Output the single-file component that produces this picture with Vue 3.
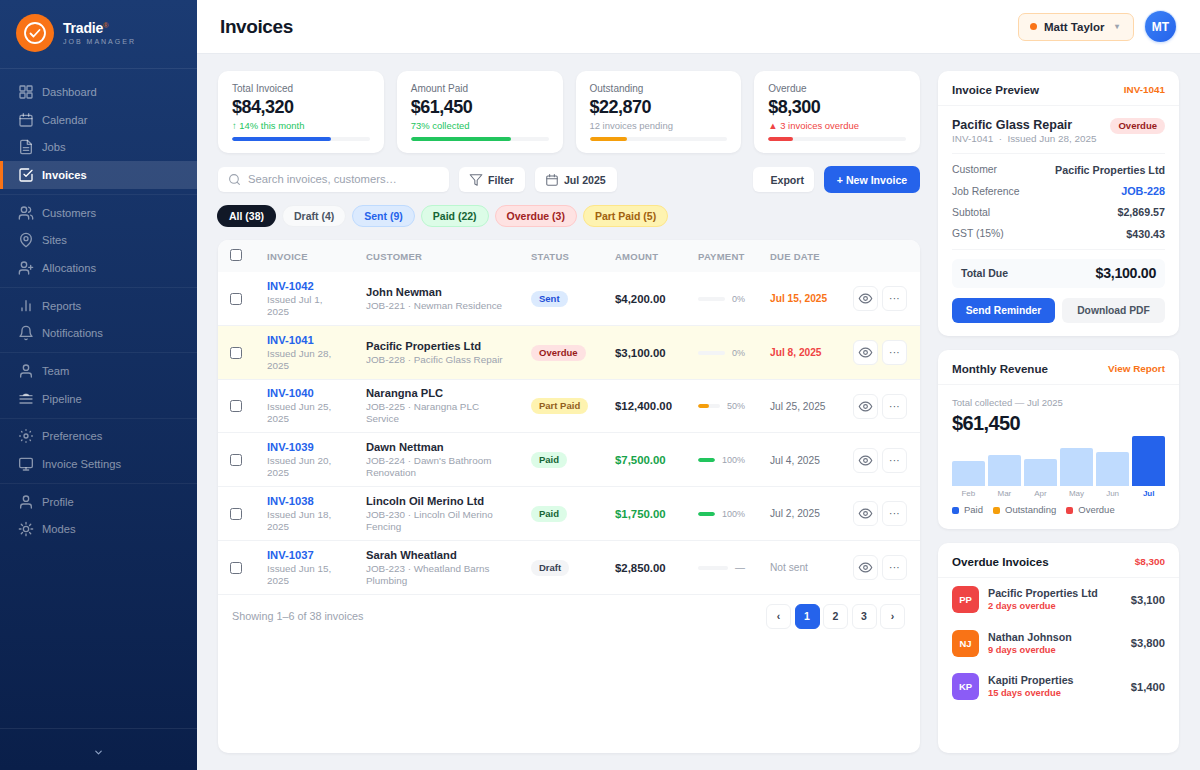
<script setup>
const icons = {
  grid: '<rect x="3" y="3" width="7.5" height="7.5" rx="1"/><rect x="13.5" y="3" width="7.5" height="7.5" rx="1"/><rect x="3" y="13.5" width="7.5" height="7.5" rx="1"/><rect x="13.5" y="13.5" width="7.5" height="7.5" rx="1"/>',
  calendar: '<rect x="3" y="5" width="18" height="16" rx="2"/><path d="M8 2.5v4M16 2.5v4M3 10h18"/>',
  file: '<path d="M14 2H6a2 2 0 0 0-2 2v16a2 2 0 0 0 2 2h12a2 2 0 0 0 2-2V8z"/><path d="M14 2v6h6M8 13h8M8 17h8"/>',
  check: '<path d="M21 11v8a2 2 0 0 1-2 2H5a2 2 0 0 1-2-2V5a2 2 0 0 1 2-2h11"/><path d="m9 11 3 3 9-9"/>',
  users: '<path d="M16 21v-2a4 4 0 0 0-4-4H6a4 4 0 0 0-4 4v2"/><circle cx="9" cy="7" r="4"/><path d="M22 21v-2a4 4 0 0 0-3-3.87M16 3.13a4 4 0 0 1 0 7.75"/>',
  pin: '<path d="M20 10c0 6-8 12-8 12s-8-6-8-12a8 8 0 0 1 16 0z"/><circle cx="12" cy="10" r="3"/>',
  userplus: '<path d="M16 21v-2a4 4 0 0 0-4-4H6a4 4 0 0 0-4 4v2"/><circle cx="9" cy="7" r="4"/><path d="M19 8v6M16 11h6"/>',
  bars: '<path d="M6 19v-4M12 19V4M18 19V9"/>',
  bell: '<path d="M6 8a6 6 0 0 1 12 0c0 7 3 9 3 9H3s3-2 3-9"/><path d="M10.3 21a2 2 0 0 0 3.4 0"/>',
  user: '<path d="M20 21v-2a4 4 0 0 0-4-4H8a4 4 0 0 0-4 4v2"/><circle cx="12" cy="7" r="4"/>',
  layers: '<path d="M3 12h18M3 18h18M3 7h18"/><path d="M8 6.5c1-2.5 7-2.500 8 0z" fill="currentColor"/>',
  dots: '<circle cx="12" cy="12" r="3"/><path d="M12 2.500v1M12 20.500v1M2.500 12h1M20.500 12h1M5.300 5.300l.7.7M18 18l.7.7M5.300 18.700l.7-.7M18 6l.7-.7"/>',
  monitor: '<rect x="2.500" y="3.500" width="19" height="14" rx="2"/><path d="M8 21h8M12 17.500V21"/>',
  sun: '<circle cx="12" cy="12" r="4"/><path d="M12 2v2.500M12 19.500V22M2 12h2.500M19.500 12H22M4.900 4.900l1.800 1.800M17.300 17.300l1.800 1.800M4.900 19.100l1.800-1.800M17.300 6.700l1.800-1.800"/>',
  search: '<circle cx="11" cy="11" r="8"/><path d="m21 21-4.300-4.300"/>',
  filter: '<path d="M22 3H2l8 9.460V19l4 2v-8.540z"/>',
  eye: '<path d="M2 12s3.500-7 10-7 10 7 10 7-3.500 7-10 7-10-7-10-7z"/><circle cx="12" cy="12" r="3"/>'
}

const navGroups = [
  [
    { label: 'Dashboard', icon: 'grid' },
    { label: 'Calendar', icon: 'calendar' },
    { label: 'Jobs', icon: 'file' },
    { label: 'Invoices', icon: 'check', active: true }
  ],
  [
    { label: 'Customers', icon: 'users' },
    { label: 'Sites', icon: 'pin' },
    { label: 'Allocations', icon: 'userplus' }
  ],
  [
    { label: 'Reports', icon: 'bars' },
    { label: 'Notifications', icon: 'bell' }
  ],
  [
    { label: 'Team', icon: 'user' },
    { label: 'Pipeline', icon: 'layers' }
  ],
  [
    { label: 'Preferences', icon: 'dots' },
    { label: 'Invoice Settings', icon: 'monitor' }
  ],
  [
    { label: 'Profile', icon: 'user' },
    { label: 'Modes', icon: 'sun' }
  ]
]

const stats = [
  { label: 'Total Invoiced', value: '$84,320', sub: '↑ 14% this month', subClass: 'green', bar: 72, color: '#2563eb' },
  { label: 'Amount Paid', value: '$61,450', sub: '73% collected', subClass: 'green', bar: 73, color: '#22c55e' },
  { label: 'Outstanding', value: '$22,870', sub: '12 invoices pending', subClass: 'grey', bar: 27, color: '#f59e0b' },
  { label: 'Overdue', value: '$8,300', sub: '▲ 3 invoices overdue', subClass: 'red', bar: 18, color: '#ef4444' }
]

const chips = [
  { label: 'All (38)', cls: 'all' },
  { label: 'Draft (4)', cls: 'draft' },
  { label: 'Sent (9)', cls: 'sent' },
  { label: 'Paid (22)', cls: 'paid' },
  { label: 'Overdue (3)', cls: 'overdue' },
  { label: 'Part Paid (5)', cls: 'part' }
]

const rows = [
  { id: 'INV-1042', issued: 'Issued Jul 1, 2025', name: 'John Newman', job: 'JOB-221 · Newman Residence', status: 'Sent', cls: 'sent', amount: '$4,200.00', pct: 0, pctLabel: '0%', due: 'Jul 15, 2025', dueCls: 'orange' },
  { id: 'INV-1041', issued: 'Issued Jun 28, 2025', name: 'Pacific Properties Ltd', job: 'JOB-228 · Pacific Glass Repair', status: 'Overdue', cls: 'overdue', amount: '$3,100.00', pct: 0, pctLabel: '0%', due: 'Jul 8, 2025', dueCls: 'red', hl: true },
  { id: 'INV-1040', issued: 'Issued Jun 25, 2025', name: 'Narangna PLC', job: 'JOB-225 · Narangna PLC Service', status: 'Part Paid', cls: 'part', amount: '$12,400.00', pct: 50, pctLabel: '50%', barColor: '#f59e0b', due: 'Jul 25, 2025' },
  { id: 'INV-1039', issued: 'Issued Jun 20, 2025', name: 'Dawn Nettman', job: "JOB-224 · Dawn's Bathroom Renovation", status: 'Paid', cls: 'paid', amount: '$7,500.00', amtCls: 'green', pct: 100, pctLabel: '100%', barColor: '#22c55e', due: 'Jul 4, 2025' },
  { id: 'INV-1038', issued: 'Issued Jun 18, 2025', name: 'Lincoln Oil Merino Ltd', job: 'JOB-230 · Lincoln Oil Merino Fencing', status: 'Paid', cls: 'paid', amount: '$1,750.00', amtCls: 'green', pct: 100, pctLabel: '100%', barColor: '#22c55e', due: 'Jul 2, 2025' },
  { id: 'INV-1037', issued: 'Issued Jun 15, 2025', name: 'Sarah Wheatland', job: 'JOB-223 · Wheatland Barns Plumbing', status: 'Draft', cls: 'draft', amount: '$2,850.00', pct: 0, pctLabel: '—', due: 'Not sent', dueCls: 'muted', dash: true }
]

const details = [
  { k: 'Customer', v: 'Pacific Properties Ltd' },
  { k: 'Job Reference', v: 'JOB-228', link: true },
  { k: 'Subtotal', v: '$2,869.57' },
  { k: 'GST (15%)', v: '$430.43' }
]

const months = [
  { m: 'Feb', h: 25 },
  { m: 'Mar', h: 31 },
  { m: 'Apr', h: 27 },
  { m: 'May', h: 38 },
  { m: 'Jun', h: 34 },
  { m: 'Jul', h: 50, cur: true }
]

const overdue = [
  { ini: 'PP', color: '#ef4444', name: 'Pacific Properties Ltd', days: '2 days overdue', amt: '$3,100' },
  { ini: 'NJ', color: '#f97316', name: 'Nathan Johnson', days: '9 days overdue', amt: '$3,800' },
  { ini: 'KP', color: '#8b5cf6', name: 'Kapiti Properties', days: '15 days overdue', amt: '$1,400' }
]
</script>

<template>
  <div class="app">
    <aside class="sidebar">
      <div class="brand">
        <div class="logo">
          <svg viewBox="0 0 24 24" width="24" height="24" fill="none" stroke="#fff" stroke-width="1.8" stroke-linecap="round" stroke-linejoin="round">
            <circle cx="12" cy="12" r="10" />
            <path d="m7.500 12.500 3 3 6-6.500" />
          </svg>
        </div>
        <div class="brand-text">
          <div class="brand-name">Tradie<sup>®</sup></div>
          <div class="brand-sub">JOB MANAGER</div>
        </div>
      </div>
      <nav class="nav">
        <div v-for="(g, i) in navGroups" :key="i" class="nav-group">
          <div v-for="item in g" :key="item.label" class="nav-item" :class="{ active: item.active }">
            <svg class="nav-icon" viewBox="0 0 24 24" fill="none" stroke="currentColor" stroke-width="2" stroke-linecap="round" stroke-linejoin="round" v-html="icons[item.icon]"></svg>
            <span>{{ item.label }}</span>
          </div>
        </div>
      </nav>
      <div class="side-foot">
        <svg viewBox="0 0 24 24" width="11" height="11" fill="none" stroke="#8fa3c6" stroke-width="2.500" stroke-linecap="round" stroke-linejoin="round"><path d="m6 9 6 6 6-6" /></svg>
      </div>
    </aside>

    <div class="page">
      <header class="topbar">
        <h1>Invoices</h1>
        <div class="top-right">
          <div class="user-pill">
            <span class="dot"></span>
            <span class="user-name">Matt Taylor</span>
            <span class="caret">▾</span>
          </div>
          <div class="avatar">MT</div>
        </div>
      </header>

      <main class="main">
        <section class="left">
          <div class="stats">
            <div v-for="s in stats" :key="s.label" class="stat card">
              <div class="stat-label">{{ s.label }}</div>
              <div class="stat-value">{{ s.value }}</div>
              <div class="stat-sub" :class="s.subClass">{{ s.sub }}</div>
              <div class="stat-track"><div class="stat-fill" :style="{ width: s.bar + '%', background: s.color }"></div></div>
            </div>
          </div>

          <div class="toolbar">
            <div class="search">
              <svg viewBox="0 0 24 24" width="13" height="13" fill="none" stroke="#9ca3af" stroke-width="2" stroke-linecap="round" v-html="icons.search"></svg>
              <span>Search invoices, customers…</span>
            </div>
            <div class="tool-btn">
              <svg viewBox="0 0 24 24" width="14" height="14" fill="none" stroke="#6b7280" stroke-width="1.800" stroke-linejoin="round" v-html="icons.filter"></svg>
              Filter
            </div>
            <div class="tool-btn">
              <svg viewBox="0 0 24 24" width="14" height="14" fill="none" stroke="#6b7280" stroke-width="1.800" stroke-linecap="round" v-html="icons.calendar"></svg>
              Jul 2025
            </div>
            <div class="spacer"></div>
            <div class="tool-btn export">Export</div>
            <div class="new-btn">+ New Invoice</div>
          </div>

          <div class="chips">
            <span v-for="c in chips" :key="c.label" class="chip" :class="c.cls">{{ c.label }}</span>
          </div>

          <div class="table card">
            <div class="tr head">
              <div class="cell"><span class="cb"></span></div>
              <div class="cell">INVOICE</div>
              <div class="cell">CUSTOMER</div>
              <div class="cell">STATUS</div>
              <div class="cell">AMOUNT</div>
              <div class="cell">PAYMENT</div>
              <div class="cell">DUE DATE</div>
              <div class="cell"></div>
            </div>
            <div v-for="r in rows" :key="r.id" class="tr body" :class="{ hl: r.hl }">
              <div class="cell"><span class="cb"></span></div>
              <div class="cell">
                <div class="inv-id">{{ r.id }}</div>
                <div class="small">{{ r.issued }}</div>
              </div>
              <div class="cell">
                <div class="cust">{{ r.name }}</div>
                <div class="small">{{ r.job }}</div>
              </div>
              <div class="cell status-cell"><span class="badge" :class="r.cls">{{ r.status }}</span></div>
              <div class="cell amt" :class="r.amtCls">{{ r.amount }}</div>
              <div class="cell">
                <div class="pay">
                  <div class="pay-track"><div class="pay-fill" :style="{ width: r.pct + '%', background: r.barColor }"></div></div>
                  <span class="pay-label" :class="{ dash: r.dash }">{{ r.pctLabel }}</span>
                </div>
              </div>
              <div class="cell due" :class="r.dueCls">{{ r.due }}</div>
              <div class="cell actions">
                <span class="act"><svg viewBox="0 0 24 24" width="15" height="15" fill="none" stroke="#6b7280" stroke-width="1.800" v-html="icons.eye"></svg></span>
                <span class="act more">···</span>
              </div>
            </div>
            <div class="tfoot">
              <span class="showing">Showing 1–6 of 38 invoices</span>
              <div class="pager">
                <span class="pg">‹</span>
                <span class="pg on">1</span>
                <span class="pg">2</span>
                <span class="pg">3</span>
                <span class="pg">›</span>
              </div>
            </div>
          </div>
        </section>

        <section class="right">
          <div class="panel card preview">
            <div class="panel-head">
              <span class="panel-title">Invoice Preview</span>
              <span class="panel-link">INV-1041</span>
            </div>
            <div class="panel-body">
              <div class="pv-top">
                <div>
                  <div class="pv-title">Pacific Glass Repair</div>
                  <div class="pv-sub">INV-1041 &nbsp;·&nbsp; Issued Jun 28, 2025</div>
                </div>
                <span class="badge overdue">Overdue</span>
              </div>
              <div class="pv-rows">
                <div v-for="d in details" :key="d.k" class="pv-row">
                  <span>{{ d.k }}</span>
                  <b :class="{ link: d.link }">{{ d.v }}</b>
                </div>
              </div>
              <div class="total">
                <span>Total Due</span>
                <b>$3,100.00</b>
              </div>
              <div class="pv-btns">
                <span class="btn primary">Send Reminder</span>
                <span class="btn secondary">Download PDF</span>
              </div>
            </div>
          </div>

          <div class="panel card revenue">
            <div class="panel-head">
              <span class="panel-title">Monthly Revenue</span>
              <span class="panel-link">View Report</span>
            </div>
            <div class="panel-body">
              <div class="rev-sub">Total collected — Jul 2025</div>
              <div class="rev-value">$61,450</div>
              <div class="chart">
                <div v-for="m in months" :key="m.m" class="col">
                  <div class="col-bar" :class="{ cur: m.cur }" :style="{ height: m.h + 'px' }"></div>
                  <div class="col-label" :class="{ cur: m.cur }">{{ m.m }}</div>
                </div>
              </div>
              <div class="legend">
                <span><i class="lg blue"></i>Paid</span>
                <span><i class="lg amber"></i>Outstanding</span>
                <span><i class="lg red"></i>Overdue</span>
              </div>
            </div>
          </div>

          <div class="panel card overdue-card">
            <div class="panel-head">
              <span class="panel-title dark">Overdue Invoices</span>
              <span class="panel-link redlink">$8,300</span>
            </div>
            <div class="od-list">
              <div v-for="o in overdue" :key="o.ini" class="od-row">
                <div class="od-av" :style="{ background: o.color }">{{ o.ini }}</div>
                <div class="od-info">
                  <div class="od-name">{{ o.name }}</div>
                  <div class="od-days">{{ o.days }}</div>
                </div>
                <div class="od-amt">{{ o.amt }}</div>
              </div>
            </div>
          </div>
        </section>
      </main>
    </div>
  </div>
</template>

<style>
html, body { margin: 0; padding: 0; background: #f0f2f6; }
</style>

<style scoped>
* { box-sizing: border-box; }
.app {
  display: flex;
  width: 1200px;
  height: 770px;
  overflow: hidden;
  font-family: "Liberation Sans", Arial, sans-serif;
  color: #111827;
  background: #f0f2f6;
}
.sidebar {
  width: 197px;
  flex: none;
  display: flex;
  flex-direction: column;
  background: linear-gradient(180deg, #1b3b73 0%, #0a1f4a 100%);
}
.brand {
  height: 69px;
  flex: none;
  display: flex;
  align-items: center;
  gap: 9px;
  padding: 0 16px 3px;
  border-bottom: 1px solid rgba(255,255,255,.08);
}
.logo {
  width: 38px;
  height: 38px;
  border-radius: 50%;
  background: #f97316;
  display: flex;
  align-items: center;
  justify-content: center;
}
.brand-name {
  font-size: 14px;
  font-weight: 700;
  color: #fff;
  letter-spacing: -.2px;
  line-height: 16px;
}
.brand-name sup {
  font-size: 7.500px;
  color: #c2602a;
  font-weight: 700;
  line-height: 0;
  vertical-align: 5px;
}
.brand-sub {
  font-size: 7px;
  letter-spacing: 2px;
  color: rgba(255,255,255,.5);
  line-height: 9px;
  margin-top: 1px;
}
.nav { flex: 1; padding-top: 9px; }
.nav-group {
  padding-bottom: 5px;
  margin-bottom: 4px;
  border-bottom: 1px solid rgba(255,255,255,.06);
}
.nav-group:last-child { border-bottom: 0; }
.nav-item {
  height: 27.700px;
  display: flex;
  align-items: center;
  gap: 8px;
  padding-left: 18px;
  font-size: 11.200px;
  color: rgba(255,255,255,.5);
}
.nav-item.active {
  background: rgba(255,255,255,.12);
  color: #fff;
  font-weight: 700;
  box-shadow: inset 3px 0 0 #f97316;
}
.nav-icon { width: 16px; height: 16px; flex: none; }
.side-foot {
  height: 42px;
  flex: none;
  display: flex;
  align-items: flex-start;
  justify-content: center;
  padding-top: 18px;
  border-top: 1px solid rgba(255,255,255,.08);
}
.page { flex: 1; min-width: 0; display: flex; flex-direction: column; }
.topbar {
  height: 54px;
  flex: none;
  background: #fff;
  border-bottom: 1px solid #e8ebf0;
  display: flex;
  align-items: center;
  justify-content: space-between;
  padding: 0 24px 0 23px;
}
.topbar h1 { margin: 0; font-size: 19px; font-weight: 700; letter-spacing: -.4px; color: #111827; }
.top-right { display: flex; align-items: center; gap: 11px; }
.user-pill {
  width: 116px;
  height: 28px;
  display: flex;
  align-items: center;
  padding-left: 11px;
  background: #fff7ed;
  border: 1px solid #fed7aa;
  border-radius: 7px;
  font-size: 11.500px;
  font-weight: 700;
  color: #1f2937;
}
.dot { width: 7px; height: 7px; border-radius: 50%; background: #f97316; margin-right: 7px; }
.caret { color: #9ca3af; font-size: 8px; margin-left: 10px; }
.avatar {
  width: 31px;
  height: 31px;
  border-radius: 50%;
  background: linear-gradient(135deg, #3b82f6, #2563eb);
  box-shadow: 0 0 0 1px #dbeafe, 0 1px 3px rgba(37,99,235,.3);
  color: #fff;
  font-size: 12px;
  font-weight: 700;
  display: flex;
  align-items: center;
  justify-content: center;
}
.main {
  flex: 1;
  min-height: 0;
  display: flex;
  gap: 18px;
  padding: 17px 21px 17px 21px;
}
.card {
  background: #fff;
  border-radius: 10px;
  box-shadow: 0 1px 3px rgba(15,23,42,.06);
}
.left { width: 702px; flex: none; display: flex; flex-direction: column; }
.right { flex: 1; min-width: 0; display: flex; flex-direction: column; gap: 14px; }
.stats { display: grid; grid-template-columns: repeat(4, 1fr); gap: 13px; }
.stat { height: 82px; padding: 12px 14px; }
.stat-label { font-size: 10px; color: #6b7280; line-height: 12px; }
.stat-value { font-size: 18px; font-weight: 700; letter-spacing: -.5px; line-height: 21px; margin-top: 2px; color: #111827; }
.stat-sub { font-size: 9.450px; line-height: 11px; margin-top: 2px; }
.green { color: #22c55e; }
.grey { color: #9ca3af; }
.red { color: #ef4444; }
.stat-track { height: 4px; border-radius: 2px; background: #f3f4f6; margin-top: 6px; overflow: hidden; }
.stat-fill { height: 100%; border-radius: 2px; }
.toolbar { display: flex; align-items: center; gap: 10px; margin-top: 13px; height: 27px; }
.search {
  width: 231px;
  height: 25px;
  background: #fff;
  border-radius: 6px;
  box-shadow: 0 1px 2px rgba(15,23,42,.05);
  display: flex;
  align-items: center;
  gap: 7px;
  padding: 0 0 1px 10px;
  font-size: 11.250px;
  color: #9ca3af;
}
.tool-btn {
  height: 25px;
  background: #fff;
  border-radius: 6px;
  box-shadow: 0 1px 2px rgba(15,23,42,.05);
  display: flex;
  align-items: center;
  gap: 5px;
  padding: 0 11px 0 10px;
  font-size: 10.600px;
  font-weight: 700;
  color: #374151;
}
.export { padding: 0 10px 0 17px; }
.spacer { flex: 1; }
.new-btn {
  height: 27px;
  width: 96px;
  background: #2563eb;
  color: #fff;
  border-radius: 7px;
  font-size: 10.600px;
  font-weight: 700;
  display: flex;
  align-items: center;
  justify-content: center;
}
.chips { display: flex; gap: 6px; margin-top: 12px; margin-left: -1px; }
.chip {
  height: 22px;
  padding: 0 11px;
  border-radius: 11px;
  font-size: 10.500px;
  font-weight: 700;
  display: flex;
  align-items: center;
  border: 1px solid transparent;
}
.chip.all { background: #111827; color: #fff; padding: 0 11px; }
.chip.draft { background: #f9fafb; color: #4b5563; border-color: #eef0f3; }
.chip.sent { background: #dbeafe; color: #2563eb; border-color: #bfdbfe; }
.chip.paid { background: #dcfce7; color: #166534; border-color: #bbf7d0; }
.chip.overdue { background: #fee2e2; color: #a12222; border-color: #fecaca; }
.chip.part { background: #fef3b0; color: #a1620e; border-color: #fde68a; }
.table { flex: 1; min-height: 0; margin-top: 13px; overflow: hidden; margin-left: 0; }
.tr {
  display: grid;
  grid-template-columns: 37px 99px 165px 84px 83px 72px 83px 1fr;
  align-items: center;
}
.cell { padding: 0 12px; min-width: 0; }
.head {
  height: 32px;
  background: #f9fafb;
  font-size: 9.500px;
  font-weight: 700;
  letter-spacing: .25px;
  color: #9ca3af;
}
.head .cb { margin-top: -3px; }
.body { height: 53.750px; padding-top: 1px; border-bottom: 1px solid #f0f2f5; }
.body.hl { background: #fefce8; }
.cb {
  display: block;
  width: 12px;
  height: 12px;
  background: #fff;
  border: 1px solid #6b7280;
  border-radius: 2.500px;
}
.inv-id { font-size: 11.200px; font-weight: 700; color: #2563eb; line-height: 13px; }
.small { font-size: 9.900px; color: #9ca3af; line-height: 12px; margin-top: 1px; }
.cust { font-size: 11.200px; font-weight: 700; color: #1f2937; line-height: 13px; }
.status-cell { display: flex; }
.badge {
  display: block;
  height: 16px;
  line-height: 16px;
  padding: 0 8px;
  border-radius: 8px;
  font-size: 9.500px;
  font-weight: 700;
  white-space: nowrap;
}
.badge.sent { background: #dbeafe; color: #1d4ed8; }
.badge.overdue { background: #fee2e2; color: #991b1b; }
.badge.part { background: #fef3b0; color: #92601e; }
.badge.paid { background: #dcfce7; color: #166534; }
.badge.draft { background: #f3f4f6; color: #374151; }
.amt { font-size: 11.400px; font-weight: 700; color: #1f2937; white-space: nowrap; }
.amt.green { color: #16a34a; }
.pay { display: flex; align-items: center; gap: 7px; width: 47px; }
.pay-track { flex: 1; height: 4px; border-radius: 2px; background: #f3f4f6; overflow: hidden; }
.pay-fill { height: 100%; border-radius: 2px; }
.pay-label { font-size: 9px; color: #9ca3af; }
.pay-label.dash { font-size: 10px; }
.due { font-size: 10.200px; color: #6b7280; white-space: nowrap; }
.due.orange { color: #f97316; font-weight: 700; }
.due.red { color: #ef4444; font-weight: 700; }
.due.muted { color: #9ca3af; }
.actions { display: flex; gap: 4px; }
.act {
  width: 25px;
  height: 25px;
  flex: none;
  background: #fff;
  border: 1px solid #eef0f3;
  border-radius: 6px;
  display: flex;
  align-items: center;
  justify-content: center;
}
.more { font-size: 10px; color: #4b5563; letter-spacing: .3px; }
.tfoot {
  height: 43px;
  display: flex;
  align-items: center;
  justify-content: space-between;
  padding: 0 15px 0 14px;
}
.showing { font-size: 10.800px; color: #9ca3af; }
.pager { display: flex; gap: 3.500px; }
.pg {
  width: 25px;
  height: 25px;
  border: 1px solid #eef0f3;
  border-radius: 6px;
  background: #fff;
  display: flex;
  align-items: center;
  justify-content: center;
  font-size: 10.500px;
  font-weight: 700;
  color: #374151;
}
.pg.on { background: #2563eb; border-color: #2563eb; color: #fff; }
.panel { display: flex; flex-direction: column; }
.panel-head {
  height: 35px;
  flex: none;
  display: flex;
  align-items: center;
  justify-content: space-between;
  padding: 2px 14px 0;
  border-bottom: 1px solid #f3f4f6;
}
.panel-title { font-size: 11.600px; font-weight: 700; color: #1f2937; }
.panel-title.dark { color: #111827; }
.panel-link { font-size: 9.900px; font-weight: 700; color: #f97316; }
.redlink { color: #ef4444; }
.panel-body { padding: 0 14px; }
.preview { height: 265px; }
.pv-top {
  display: flex;
  justify-content: space-between;
  align-items: flex-start;
  padding: 12px 0 8px;
  border-bottom: 1px solid #f3f4f6;
}
.pv-title { font-size: 12.500px; font-weight: 700; color: #1f2937; line-height: 15px; }
.pv-sub { font-size: 9.900px; color: #9ca3af; line-height: 12px; }
.pv-rows { padding: 5px 0 4px; border-bottom: 1px solid #f3f4f6; }
.pv-row {
  height: 21.400px;
  display: flex;
  align-items: center;
  justify-content: space-between;
  font-size: 10.400px;
  color: #6b7280;
}
.pv-row b { color: #374151; font-weight: 700; font-size: 10.700px; }
.pv-row b.link { color: #2563eb; font-size: 10.800px; }
.total {
  height: 29px;
  margin-top: 9px;
  background: #f8fafc;
  border-radius: 6px;
  display: flex;
  align-items: center;
  justify-content: space-between;
  padding: 0 9px;
  font-size: 10.500px;
  font-weight: 700;
  color: #374151;
}
.total b { font-size: 14.200px; color: #111827; letter-spacing: -.3px; }
.pv-btns { display: flex; gap: 7px; margin-top: 10px; }
.btn {
  flex: 1;
  height: 25px;
  border-radius: 6px;
  font-size: 10.300px;
  font-weight: 700;
  display: flex;
  align-items: center;
  justify-content: center;
}
.primary { background: #2563eb; color: #fff; }
.secondary { background: #f3f4f6; color: #4b5563; }
.revenue { height: 179px; }
.rev-sub { font-size: 9.500px; color: #9ca3af; margin-top: 12px; line-height: 12px; }
.rev-value { font-size: 20px; font-weight: 700; letter-spacing: -.6px; line-height: 24px; margin-top: 2px; color: #111827; }
.chart { display: flex; align-items: flex-end; gap: 3.500px; height: 65px; margin-top: 1px; }
.col { flex: 1; display: flex; flex-direction: column; justify-content: flex-end; }
.col-bar { background: #bfdbfe; border-radius: 2px 2px 0 0; }
.col-bar.cur { background: #2563eb; }
.col-label { font-size: 8px; text-align: center; color: #9ca3af; height: 15px; line-height: 15px; }
.col-label.cur { color: #2563eb; font-weight: 700; }
.legend { display: flex; gap: 10px; margin-top: 3px; font-size: 9.500px; color: #6b7280; line-height: 12px; }
.legend span { display: flex; align-items: center; }
.lg { width: 7px; height: 7px; border-radius: 2px; margin-right: 5px; }
.lg.blue { background: #2563eb; }
.lg.amber { background: #f59e0b; }
.lg.red { background: #ef4444; }
.overdue-card { flex: 1; min-height: 0; }
.od-list { padding: 8px 14px; display: flex; flex-direction: column; gap: 16.700px; }
.od-row { display: flex; align-items: center; gap: 9px; height: 27px; }
.od-av {
  width: 27px;
  height: 27px;
  flex: none;
  border-radius: 6px;
  color: #fff;
  font-size: 9.500px;
  font-weight: 700;
  display: flex;
  align-items: center;
  justify-content: center;
}
.od-info { flex: 1; min-width: 0; }
.od-name { font-size: 10.700px; font-weight: 700; color: #374151; line-height: 13px; }
.od-days { font-size: 9.300px; font-weight: 700; color: #ef4444; line-height: 11px; margin-top: 1px; }
.od-amt { font-size: 11.200px; font-weight: 700; color: #374151; }
</style>
